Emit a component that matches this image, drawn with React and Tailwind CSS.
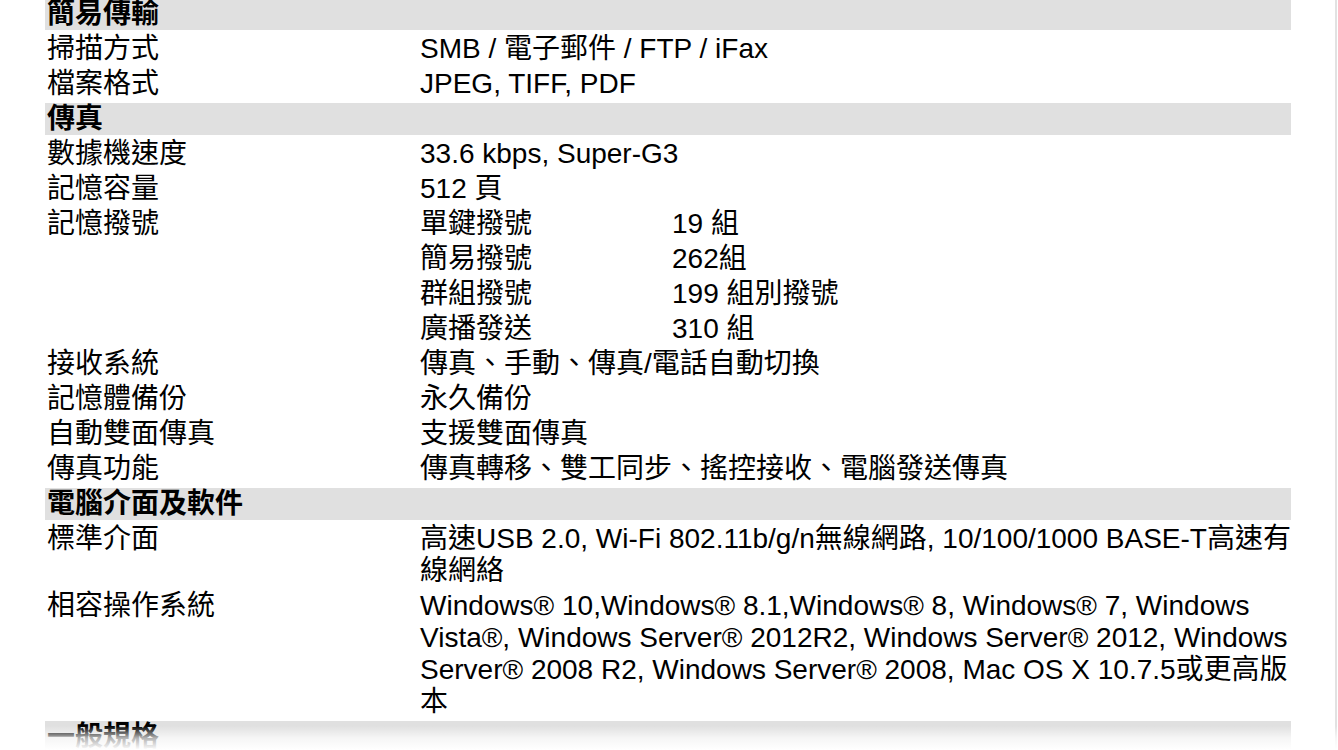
import React from 'react';

const sections = [
    {
        title: '簡易傳輸',
        rows: [
            { label: '掃描方式', value: 'SMB / 電子郵件 / FTP / iFax' },
            { label: '檔案格式', value: 'JPEG, TIFF, PDF' },
        ],
    },
    {
        title: '傳真',
        rows: [
            { label: '數據機速度', value: '33.6 kbps, Super-G3' },
            { label: '記憶容量', value: '512 頁' },
            {
                label: '記憶撥號',
                sub: [
                    ['單鍵撥號', '19 組'],
                    ['簡易撥號', '262組'],
                    ['群組撥號', '199 組別撥號'],
                    ['廣播發送', '310 組'],
                ],
            },
            { label: '接收系統', value: '傳真、手動、傳真/電話自動切換' },
            { label: '記憶體備份', value: '永久備份' },
            { label: '自動雙面傳真', value: '支援雙面傳真' },
            { label: '傳真功能', value: '傳真轉移、雙工同步、搖控接收、電腦發送傳真' },
        ],
    },
    {
        title: '電腦介面及軟件',
        rows: [
            { label: '標準介面', value: '高速USB 2.0, Wi-Fi 802.11b/g/n無線網路, 10/100/1000 BASE-T高速有線網絡' },
            {
                label: '相容操作系統',
                value: 'Windows® 10,Windows® 8.1,Windows® 8, Windows® 7, Windows Vista®, Windows Server® 2012R2, Windows Server® 2012, Windows Server® 2008 R2, Windows Server® 2008, Mac OS X 10.7.5或更高版本',
            },
        ],
    },
    { title: '一般規格', rows: [] },
];

const SpecRow = ({ row }) => (
    <div className="grid grid-cols-[373px_873px] mb-[3px]">
        <div className="px-[2px]">{row.label}</div>
        <div className="pl-[2px]">
            {row.sub ? (
                row.sub.map(([k, v], i) => (
                    <div key={i} className={`grid grid-cols-[252px_1fr] ${i < row.sub.length - 1 ? 'mb-[3px]' : ''}`}>
                        <div>{k}</div>
                        <div>{v}</div>
                    </div>
                ))
            ) : (
                row.value
            )}
        </div>
    </div>
);

export default function App() {
    return (
        <div className="relative w-[1338px] h-[750px] overflow-hidden bg-white text-black font-['Liberation_Sans','Noto_Sans_CJK_TC',sans-serif] text-[28px] leading-[32px]">
            <div className="w-[1246px] ml-[45px] -mt-[2px]">
                {sections.map((s) => (
                    <div key={s.title}>
                        <div className="bg-[#e0e0e0] px-[2px] font-bold mb-[3px]">{s.title}</div>
                        {s.rows.map((r) => (
                            <SpecRow key={r.label} row={r} />
                        ))}
                    </div>
                ))}
            </div>
            {/* scroll edge */}
            <div className="absolute top-0 right-[1px] w-[2px] h-full bg-[#e2e2e2]" />
            {/* fade at the bottom */}
            <div className="absolute left-0 bottom-0 w-full h-[24px] bg-linear-to-t from-white via-white/70 to-transparent" />
        </div>
    );
}
